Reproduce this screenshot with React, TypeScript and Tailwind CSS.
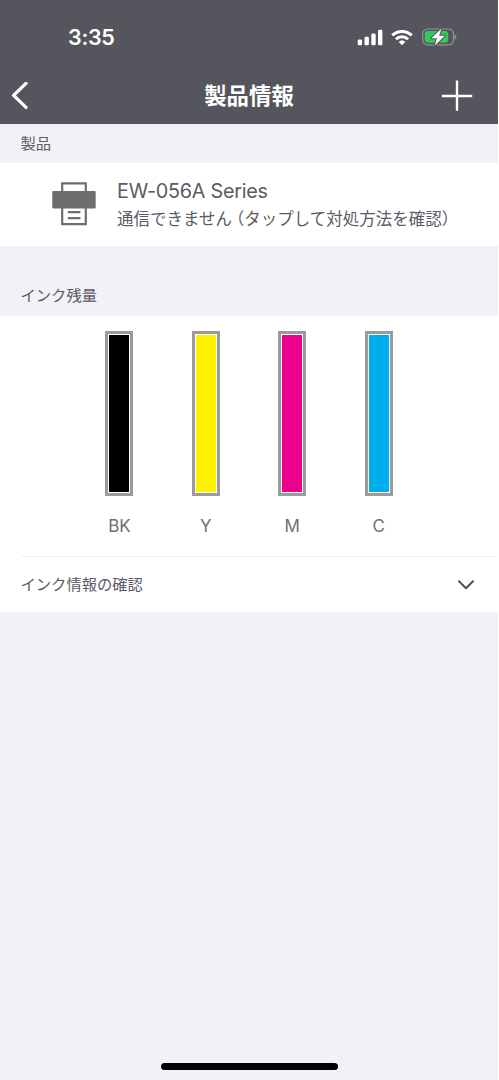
interface Ink {
  label: string;
  color: string;
}

const inks: Ink[] = [
  { label: "BK", color: "bg-black" },
  { label: "Y", color: "bg-[#fff100]" },
  { label: "M", color: "bg-[#ec008c]" },
  { label: "C", color: "bg-[#00aeef]" },
];

function SignalIcon() {
  return (
    <svg width="26" height="17" viewBox="0 0 26 17" fill="#fff">
      <rect x="0.7" y="10.6" width="4.4" height="5.7" rx="1.3" />
      <rect x="7.5" y="7.8" width="4.4" height="8.5" rx="1.3" />
      <rect x="14.3" y="4.4" width="4.4" height="11.9" rx="1.3" />
      <rect x="21" y="0.8" width="4.4" height="15.5" rx="1.3" />
    </svg>
  );
}

function WifiIcon() {
  return (
    <svg width="22" height="17" viewBox="0 0 22 17" fill="none" stroke="#fff" strokeWidth="3">
      <path d="M1.3 6.4a13.8 13.8 0 0 1 19.4 0" />
      <path d="M4.9 10.2a8.7 8.7 0 0 1 12.2 0" />
      <path d="M11 16.3l-3.3-3.4a4.8 4.8 0 0 1 6.6 0z" fill="#fff" stroke="none" />
    </svg>
  );
}

function BatteryIcon() {
  return (
    <svg width="35" height="18" viewBox="0 0 35 18">
      <rect x="0.7" y="1" width="30.8" height="15.8" rx="4.8" fill="none" stroke="#94959a" strokeWidth="1.2" />
      <path d="M32.7 6.4c2.3.8 2.3 4.2 0 5z" fill="#94959a" />
      <rect x="2.7" y="3" width="23.5" height="11.8" rx="3.2" fill="#34c759" />
      <path
        d="M19.4 0.4L9.4 10.3h5.6l-2.2 7.3 10-9.9h-5.7z"
        fill="#fff"
        stroke="#55565d"
        strokeWidth="2"
        paintOrder="stroke"
        strokeLinejoin="round"
      />
    </svg>
  );
}

function PrinterIcon() {
  return (
    <svg width="44" height="44" viewBox="0 0 44 44" fill="none" stroke="#6e6e6e" strokeWidth="2.2">
      <path d="M10.2 9V1.4h23.6V9M10.2 26v16.2h23.6V26" />
      <rect x="0.3" y="9" width="43.4" height="17.4" rx="1" fill="#6e6e6e" stroke="none" />
      <path d="M15.8 30.2h12.6M15.8 36.2h12.6" />
    </svg>
  );
}

function StatusBar() {
  return (
    <div className="flex h-[67px] items-start justify-between pl-[68px] pr-[41px] text-white">
      <span className="mt-[21px] text-[21.5px] font-semibold leading-8 tracking-[-0.3px]">3:35</span>
      <div className="mt-[28px] flex items-center">
        <SignalIcon />
        <span className="ml-2 mr-[9px]">
          <WifiIcon />
        </span>
        <BatteryIcon />
      </div>
    </div>
  );
}

function NavBar() {
  return (
    <div className="grid h-[57px] grid-cols-[1fr_auto_1fr] items-center text-white">
      <button type="button" aria-label="戻る" className="pl-[11px]">
        <svg width="18" height="28" viewBox="0 0 18 28" fill="none" stroke="#fff" strokeWidth="3.3" strokeLinecap="round" strokeLinejoin="round">
          <path d="M15 1.4L2.6 13.4 15 25.4" />
        </svg>
      </button>
      <h1 className="text-[22.4px] font-bold leading-8">製品情報</h1>
      <button type="button" aria-label="追加" className="justify-self-end pr-[25px]">
        <svg width="32" height="32" viewBox="0 0 32 32" stroke="#fff" strokeWidth="2.4">
          <path d="M16 0.4v30.4M0.8 16h30.4" />
        </svg>
      </button>
    </div>
  );
}

function InkTank({ ink }: { ink: Ink }) {
  return (
    <div className="flex w-[86.4px] flex-col items-center">
      <div className="h-[165px] w-[28px] border-[3px] border-[#9b9b9b] bg-white p-px">
        <div className={`h-full w-full ${ink.color}`} />
      </div>
      <span className="mt-[18px] text-[17px] leading-6 text-[#707070]">{ink.label}</span>
    </div>
  );
}

export default function App() {
  return (
    <div className="flex h-[1080px] w-[499px] flex-col overflow-hidden border-r border-white bg-[#f1f1f7] font-['Inter','Noto_Sans_CJK_JP',sans-serif] text-[#5b5b66]">
      <header className="h-[124px] shrink-0 bg-[#55565d]">
        <StatusBar />
        <NavBar />
      </header>

      <h2 className="h-[39px] pl-[20.5px] text-[15.3px] leading-[39px]">製品</h2>
      <section className="flex h-[82.5px] items-center bg-white pl-[52px]">
        <PrinterIcon />
        <div className="ml-[21px] whitespace-nowrap pt-[2px]">
          <div className="text-[19.8px] leading-7 tracking-[-0.25px]">EW-056A Series</div>
          <div className="text-[16.5px] leading-7">
            通信できません
            <span className="ml-[4px] [font-feature-settings:'halt']">（</span>
            タップして対処方法を確認
            <span className="[font-feature-settings:'halt']">）</span>
          </div>
        </div>
      </section>

      <h2 className="h-[70px] pl-[20.5px] pt-[30px] text-[15.3px] leading-[39px]">インク残量</h2>
      <section className="bg-white">
        <div className="flex h-[240.5px] justify-center pt-[15.5px]">
          {inks.map((ink) => (
            <InkTank key={ink.label} ink={ink} />
          ))}
        </div>
        <button
          type="button"
          className="ml-[20.5px] flex h-14 w-[477.5px] items-center justify-between border-t border-[#f1f1f3] pr-6 pt-px text-[15.3px]"
        >
          インク情報の確認
          <svg width="16" height="10" viewBox="0 0 16 10" fill="none" stroke="#505058" strokeWidth="2" strokeLinecap="round" strokeLinejoin="round">
            <path d="M1 1.2l7 7 7-7" />
          </svg>
        </button>
      </section>

      <div className="mb-[10px] ml-[161px] mt-auto h-[7px] w-[177px] rounded-full bg-black" />
    </div>
  );
}
